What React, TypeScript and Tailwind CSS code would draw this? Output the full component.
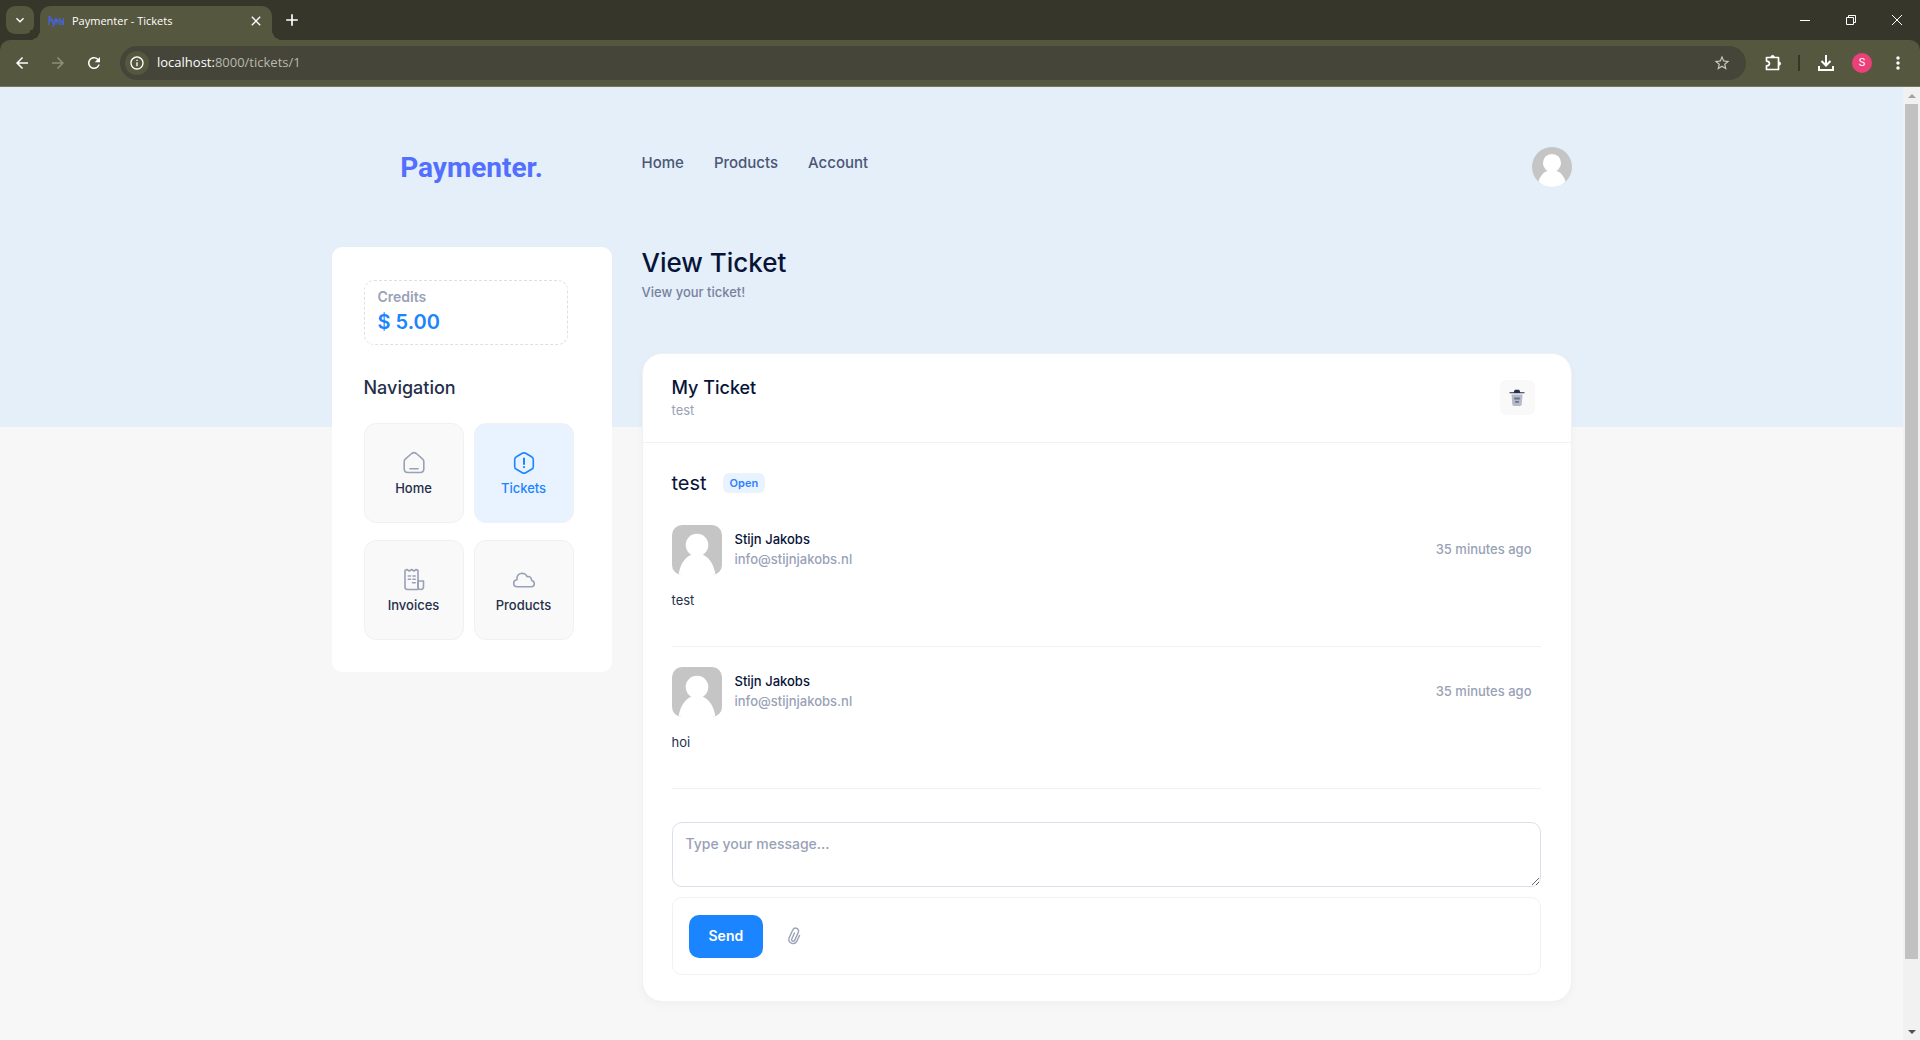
import React from 'react';
import {
  MdArrowBack,
  MdArrowForward,
  MdRefresh,
  MdStarOutline,
  MdMoreVert,
  MdClose,
  MdAdd,
  MdKeyboardArrowDown,
  MdInfoOutline,
} from 'react-icons/md';

function TabStrip() {
  return (
    <div className="flex h-10 items-end bg-[#37362a] pl-1.5 text-white">
      <button aria-label="Search tabs" className="mb-1.5 flex size-7 items-center justify-center rounded-[9px] bg-[#56573f]">
        <MdKeyboardArrowDown className="size-4" />
      </button>
      <div className="relative ml-1.5 flex h-[34px] w-[232px] items-center rounded-t-[10px] bg-[#56573f] px-2 pb-1">
        <span className="absolute -left-2.5 bottom-0 size-2.5 bg-[radial-gradient(circle_at_0_0,#37362a_10px,#56573f_10px)]" />
        <span className="absolute -right-2.5 bottom-0 size-2.5 bg-[radial-gradient(circle_at_100%_0,#37362a_10px,#56573f_10px)]" />
        <svg viewBox="0 0 16 16" className="size-4" fill="none" stroke="#4a62d8" strokeWidth="1.3" aria-hidden="true">
          <path d="M1 3v9M1 4c3-1 3 4 0 4M4 6l1 5M7 6l-2 8M8 12V6l2 3V6M12 12V5M12 8h2v4M15.5 5v7" />
        </svg>
        <span className="ml-2 flex-1 font-['Open_Sans','Noto_Sans',sans-serif] text-[11px]">Paymenter - Tickets</span>
        <button aria-label="Close tab">
          <MdClose className="size-4" />
        </button>
      </div>
      <button aria-label="New tab" className="mb-2.5 ml-2.5 text-white">
        <MdAdd className="size-5" />
      </button>
      <div className="ml-auto flex h-10 items-center">
        <button aria-label="Minimize" className="flex h-10 w-[46px] items-center justify-center">
          <svg viewBox="0 0 10 10" className="size-2.5" stroke="currentColor"><path d="M0 5.5h10" /></svg>
        </button>
        <button aria-label="Restore" className="flex h-10 w-[46px] items-center justify-center">
          <svg viewBox="0 0 10 10" className="size-2.5" fill="none" stroke="currentColor"><path d="M.5 2.5h7v7h-7zM2.500 2.500v-2h7v7h-2" /></svg>
        </button>
        <button aria-label="Close" className="flex h-10 w-[46px] items-center justify-center">
          <svg viewBox="0 0 10 10" className="size-2.5" stroke="currentColor"><path d="M0 0l10 10M10 0L0 10" /></svg>
        </button>
      </div>
    </div>
  );
}

function Toolbar() {
  return (
    <div className="bg-[#37362a]">
      <div className="flex h-[47px] items-center rounded-t-[10px] border-b border-[#77775f] bg-[#56573f] pr-3 pl-3 text-white">
        <button aria-label="Back" className="flex size-5 items-center justify-center"><MdArrowBack className="size-[18px]" /></button>
        <button aria-label="Forward" className="ml-4 flex size-5 items-center justify-center text-[#8f8f7e]"><MdArrowForward className="size-[18px]" /></button>
        <button aria-label="Reload" className="ml-4 flex size-5 items-center justify-center"><MdRefresh className="size-[18px]" /></button>
        <div className="ml-4 flex h-[34px] flex-1 items-center rounded-full bg-[#454539] pr-[15px] pl-[5px]">
          <button aria-label="Site information" className="flex size-6 items-center justify-center rounded-full bg-[#56573f]">
            <MdInfoOutline className="size-4" />
          </button>
          <span className="ml-2 flex-1 font-['Open_Sans','Noto_Sans',sans-serif] text-[13px] text-[#b9b9af]">
            <span className="text-white">localhost:</span>8000/tickets/1
          </span>
          <button aria-label="Bookmark" className="text-[#c8c8c0]"><MdStarOutline className="size-[18px]" /></button>
        </div>
        <button aria-label="Extensions" className="ml-[18px]">
          <svg viewBox="0 0 18 18" className="size-[18px]" fill="none" stroke="currentColor" strokeWidth="1.7" strokeLinejoin="round">
            <path d="M2.500 3.500h12v12h-12v-3.600c2.200-.2 3-1.200 3-2.400s-.8-2.200-3-2.400z" />
            <path d="M7 3a1.600 1.600 0 0 1 3.200 0zM15 8a1.600 1.600 0 0 1 0 3.200z" fill="currentColor" strokeWidth="1" />
          </svg>
        </button>
        <span className="ml-4 h-4 w-0.5 bg-[#37362a]" />
        <button aria-label="Downloads" className="ml-[17px]">
          <svg viewBox="0 0 18 18" className="size-[18px]" fill="none" stroke="currentColor" strokeWidth="2">
            <path d="M9 1v10M4.500 7L9 11.500 13.500 7M2 12v4h14v-4" />
          </svg>
        </button>
        <button aria-label="Profile" className="ml-[17px] flex size-5 items-center justify-center rounded-full bg-[#ec407a] font-[Roboto,sans-serif] text-[11px]">S</button>
        <button aria-label="Menu" className="ml-4"><MdMoreVert className="size-5" /></button>
      </div>
    </div>
  );
}

function Scrollbar() {
  return (
    <div className="flex w-[17px] shrink-0 flex-col items-center bg-[#f1f1f1]">
      <div className="flex h-[17px] items-center">
        <svg viewBox="0 0 8 4" className="h-1 w-2" fill="#a3a3a3"><path d="M0 4l4-4 4 4z" /></svg>
      </div>
      <div className="w-full flex-1 px-0.5">
        <div className="h-[93%] bg-[#c1c1c1]" />
      </div>
      <div className="flex h-[17px] items-center">
        <svg viewBox="0 0 8 4" className="h-1 w-2" fill="#505050"><path d="M0 0l4 4 4-4z" /></svg>
      </div>
    </div>
  );
}

function Avatar({ className }: { className: string }) {
  return (
    <svg viewBox="0 0 50 50" className={className} role="img" aria-label="User avatar">
      <rect width="50" height="50" fill="#c5c5c5" />
      <circle cx="25" cy="20" r="11.300" fill="#fff" />
      <path d="M6.500 50C8 38 15 30 21 29.500h8C35 30 42 38 43.500 50z" fill="#fff" />
    </svg>
  );
}

const iconProps = {
  viewBox: '0 0 24 24',
  className: 'size-6',
  fill: 'none',
  stroke: 'currentColor',
  strokeWidth: 1.6,
  strokeLinecap: 'round' as const,
  strokeLinejoin: 'round' as const,
  'aria-hidden': true,
};

const tiles = [
  {
    label: 'Home',
    icon: (
      <svg {...iconProps}>
        <path d="M2.200 10.500c0-1.200.4-2 1.300-2.700l6.200-5.300c1.400-1.100 3.200-1.100 4.600 0l6.200 5.300c.9.7 1.300 1.500 1.300 2.700v7.300c0 2.400-1.300 3.700-3.700 3.700H5.900c-2.400 0-3.700-1.300-3.700-3.700z" />
        <path d="M8 17.800h8" />
      </svg>
    ),
  },
  {
    label: 'Tickets',
    active: true,
    icon: (
      <svg {...iconProps}>
        <path d="M10.300 2.300c1.100-.6 2.300-.6 3.400 0l5.900 3.400c1.100.6 1.700 1.600 1.700 2.900v6.800c0 1.300-.6 2.300-1.700 2.900l-5.900 3.400c-1.100.6-2.300.6-3.400 0l-5.900-3.400c-1.100-.6-1.700-1.600-1.700-2.900V8.600c0-1.300.6-2.300 1.700-2.900z" />
        <path d="M12 7.500v5.500M12 16v.3" strokeWidth="2" />
      </svg>
    ),
  },
  {
    label: 'Invoices',
    icon: (
      <svg {...iconProps}>
        <path d="M3 2.500l1.800-1 2.400 1.500 2.400-1.500L12 3l2.200-1.500 1.800 1V21.500H5.500C3.800 21.500 3 20.500 3 19z" />
        <path d="M16 13h5.500v5.500c0 2-1 3-2.700 3s-2.800-1-2.800-3z" />
        <path d="M6.300 8h2.200M11 8h2.200M6.300 11.300h2.200M11 11.300h2.200M10.500 14.700h2.700" />
      </svg>
    ),
  },
  {
    label: 'Products',
    icon: (
      <svg {...iconProps}>
        <path d="M5.200 18.800h13.900c1.900 0 3.200-1.300 3.200-3 0-1.800-1.200-3-2.700-3.300.2-2.700-1.700-4.400-4.600-3.900C14 6.300 12 5.300 9.800 5.300 6.300 5.500 4.400 8.200 5 11.800c-1.900.2-3.300 1.700-3.300 3.500 0 2 1.500 3.500 3.500 3.500z" />
      </svg>
    ),
  },
];

function Sidebar() {
  return (
    <aside className="w-[280px] shrink-0 self-start rounded-[10px] bg-white px-8 pt-[33px] pb-8">
      <div className="mr-3 h-[65px] rounded-[10px] border border-dashed border-[#dbdfe9] px-[13px] pt-1.5">
        <div className="text-sm font-semibold text-[#99a1b7]">Credits</div>
        <div className="text-xl leading-[30px] font-semibold text-[#1b84ff]">$ 5.00</div>
      </div>
      <h2 className="mt-[29px] text-lg leading-7 font-medium text-[#252f4a]">Navigation</h2>
      <nav aria-label="Client area" className="mt-[21px] mr-1.5 grid grid-cols-2 gap-x-2.5 gap-y-[17px]">
        {tiles.map((t) => (
          <a
            key={t.label}
            href="#"
            className={
              t.active
                ? 'flex h-[100px] flex-col items-center justify-center gap-[3px] rounded-xl border border-[#f1f1f4] bg-[#e9f3ff] pt-0.5 text-[#1b84ff]'
                : 'flex h-[100px] flex-col items-center justify-center gap-[3px] rounded-xl border border-[#f1f1f4] bg-[#f9f9f9] pt-0.5 text-[#99a1b7]'
            }
          >
            {t.icon}
            <span className={t.active ? 'text-[13px] leading-5 font-medium' : 'text-[13px] leading-5 font-medium text-[#252f4a]'}>{t.label}</span>
          </a>
        ))}
      </nav>
    </aside>
  );
}

function Message({ body }: { body: string }) {
  return (
    <article className="mb-5 border-b border-[#f1f1f4] pb-9">
      <div className="flex items-center">
        <Avatar className="size-[50px] rounded-[10px]" />
        <div className="ml-[13px] pb-0.5 text-[13px] leading-5 font-medium">
          <div className="text-[#071437]">Stijn Jakobs</div>
          <a href="#" className="block text-[#99a1b7]">info@stijnjakobs.nl</a>
        </div>
        <span className="mr-[9px] ml-auto text-[13px] font-medium text-[#99a1b7]">35 minutes ago</span>
      </div>
      <p className="mt-[15px] text-[13px] leading-5 text-[#252f4a]">{body}</p>
    </article>
  );
}

function TicketCard() {
  return (
    <section className="rounded-[20px] border border-[#f1f1f4] bg-white shadow-[0_3px_8px_rgba(0,0,0,0.03)]">
      <header className="flex h-[89px] items-center justify-between border-b border-[#f1f1f4] pr-9 pb-px pl-[29px]">
        <div>
          <h2 className="text-lg leading-6 font-medium text-[#071437]">My Ticket</h2>
          <p className="text-[13px] leading-5 text-[#99a1b7]">test</p>
        </div>
        <button aria-label="Delete ticket" className="flex size-[35px] items-center justify-center rounded-md bg-[#f9f9f9]">
          <svg viewBox="0 0 18 18" className="size-[18px]" aria-hidden="true">
            <path d="M3.500 5.500h11l-.8 9.800c-.1 1-.8 1.700-1.800 1.700H6.100c-1 0-1.700-.7-1.800-1.700z" fill="#b5b9c8" />
            <path d="M6.200 8.500h5.600v2H6.200zM7.200 12h3.600v1.700H7.200z" fill="#6b7183" />
            <path d="M1.500 3.200h4.200L6.800.8h4.400l1.100 2.400h4.200v1.100h-15z" fill="#252f4a" />
          </svg>
        </button>
      </header>
      <div className="pt-6 pr-[30px] pb-[26px] pl-[29px]">
        <div className="mb-[26px] flex items-center gap-4">
          <h3 className="text-xl leading-8 text-[#071437]">test</h3>
          <span className="h-5 rounded-md bg-[#e9f3ff] px-[7px] text-[11px] leading-5 font-semibold text-[#2f80ff]">Open</span>
        </div>
        <Message body="test" />
        <Message body="hoi" />
        <form className="pt-[13px]" onSubmit={(e) => e.preventDefault()}>
          <textarea
            aria-label="Message"
            placeholder="Type your message..."
            className="block h-[65px] w-full rounded-[10px] border border-[#dbdfe9] px-[13px] py-[11px] text-sm font-medium placeholder:text-[#99a1b7]"
          />
          <div className="mt-2.5 flex h-[78px] items-center rounded-[10px] border border-[#f1f1f4] px-4">
            <button type="submit" className="h-[43px] rounded-[10px] bg-[#1b84ff] px-5 text-sm font-semibold text-white">Send</button>
            <button type="button" aria-label="Attach file" className="ml-[22px] text-[#99a1b7]">
              <svg viewBox="0 0 18 18" className="size-[18px]" fill="none" stroke="currentColor" strokeWidth="1.400" strokeLinecap="round" aria-hidden="true">
                <path d="M14.500 8.500l-2.300 5c-1 2.200-3 3.600-5.300 2.900-2.600-.8-3.700-3.200-2.700-5.600l3.300-7.300c.8-1.900 2.500-2.800 4.200-2.100s2.300 2.400 1.500 4.200l-3.300 7.300c-.5 1.100-1.400 1.500-2.300 1.200s-1.200-1.200-.8-2.200l2.600-5.900" />
              </svg>
            </button>
          </div>
        </form>
      </div>
    </section>
  );
}

export default function App() {
  return (
    <div className="flex h-screen flex-col overflow-hidden">
      <TabStrip />
      <Toolbar />
      <div className="flex min-h-0 flex-1">
        <div className="flex-1 overflow-hidden bg-[linear-gradient(#e4effa_340px,#f7f7f7_340px)] font-[Inter,sans-serif]">
          <div className="mx-auto max-w-[1280px] px-5">
            <header className="flex h-40 items-start pt-[60px]">
              <a href="#" className="w-[280px] text-center font-[Roboto,sans-serif] text-[28px] leading-[42px] font-bold text-[#5270fd]">Paymenter.</a>
              <nav aria-label="Main" className="ml-[30px] flex gap-[30px] text-[15px] leading-[31px] font-medium text-[#4b5675]">
                <a href="#">Home</a>
                <a href="#">Products</a>
                <a href="#">Account</a>
              </nav>
              <Avatar className="ml-auto size-10 rounded-full" />
            </header>
            <div className="flex gap-[30px]">
              <Sidebar />
              <main className="min-w-0 flex-1">
                <h1 className="text-[26px] leading-8 font-medium text-[#071437]">View Ticket</h1>
                <p className="mt-[3px] mb-[51px] text-[13px] leading-5 font-medium text-[#78829d]">View your ticket!</p>
                <TicketCard />
              </main>
            </div>
          </div>
        </div>
        <Scrollbar />
      </div>
    </div>
  );
}
